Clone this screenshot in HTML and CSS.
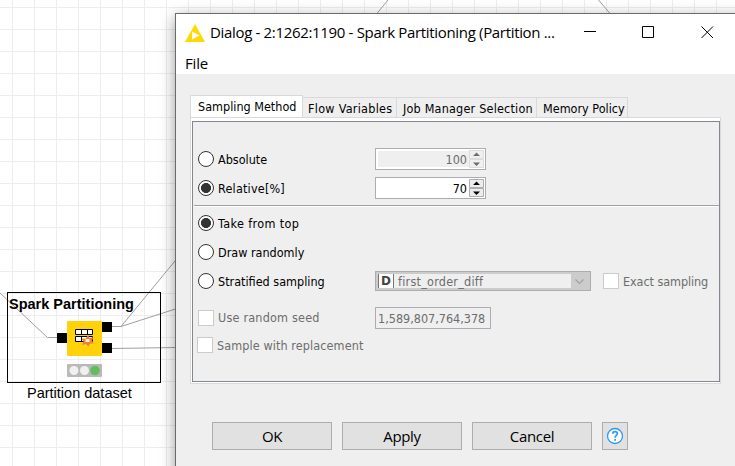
FILE: index.html
```
<!DOCTYPE html>
<html lang="en">
<head>
<meta charset="utf-8">
<title>Spark Partitioning</title>
<link rel="stylesheet" href="styles.css">
</head>
<body>
<main class="canvas">
  <svg class="wires" width="735" height="466" viewBox="0 0 735 466">
    <path d="M0 293L47.500 337.500H58M111 326.500H121L177 258.500M121 326.500L177 308.500M111 348.500L177 347.500M376.500 14L388 0M598.500 0L610.500 14"/>
  </svg>
  <section class="node">
    <h2 class="node-title">Spark Partitioning</h2>
    <svg class="node-icon" width="56" height="60" viewBox="0 0 56 60">
      <rect x="0" y="14" width="10" height="10" fill="#000"/>
      <rect x="45" y="3" width="10" height="10" fill="#000"/>
      <rect x="45" y="24" width="10" height="10" fill="#000"/>
      <rect x="10" y="2" width="35" height="35" rx="1" fill="#ffd20a"/>
      <path d="M18.500 10.500h17v5h-17zM24.500 10.500v5M30.500 10.500v5M18.500 17.500h17v5h-17zM24.500 17.500v5" fill="#fff" stroke="#000"/>
      <path d="M31 16l1.500 3 4-1-1.500 3.500 1.500 3-3.500 0-1.500 3-2.500-2.500-4 1 1.500-3.500-2-3 4 .3z" fill="#ef7d3c"/>
      <path d="M28.500 20h4v3h-4z" fill="#fff1e6"/>
      <rect x="10" y="45" width="35" height="13" rx="1" fill="#b9b9b9"/>
      <circle cx="17" cy="51.500" r="4.500" fill="#f0f0f0"/>
      <circle cx="27.500" cy="51.500" r="4.500" fill="#f0f0f0"/>
      <circle cx="38" cy="51.500" r="4.800" fill="#66bb60"/>
    </svg>
  </section>
  <p class="node-caption">Partition dataset</p>

  <section class="dialog">
    <header class="titlebar">
      <svg class="logo" width="20" height="18" viewBox="0 0 20 18"><path d="M10 0L20 18H0z" fill="#ffd800"/><path d="M7 7.500L14.500 11.500L7 15.500z" fill="#fff"/></svg>
      <h1 class="title">Dialog - 2:1262:1190 - Spark Partitioning (Partition ...</h1>
      <svg class="controls" width="132" height="14" viewBox="0 0 132 14"><path d="M0 5.500H12M58.500 .5h11v11h-11zM117.500 .5L129 12M129 .5L117.500 12" fill="none" stroke="#000"/></svg>
    </header>
    <nav class="menubar"><span class="menu-item">File</span></nav>
    <div class="content">
      <div class="tabs">
        <span class="tab tab-active">Sampling Method</span>
        <span class="tab tab-flow">Flow Variables</span>
        <span class="tab tab-job">Job Manager Selection</span>
        <span class="tab tab-memory">Memory Policy</span>
      </div>
      <div class="panel">
        <div class="panel-body">
          <div class="row">
            <i class="radio"></i><span class="label">Absolute</span>
            <div class="spinner disabled"><span class="value">100</span><svg width="16" height="20" viewBox="0 0 16 20"><path d="M.5 1.500h14v8h-14zM.5 10.500h14v8h-14z" fill="#efefef" stroke="#dcdcdc"/><path d="M4 7h7L7.500 3.500zM4 13.500h7l-3.500 3.500z" fill="#6d6d6d"/></svg></div>
          </div>
          <div class="row">
            <i class="radio on"></i><span class="label loose">Relative[%]</span>
            <div class="spinner"><span class="value">70</span><svg width="16" height="20" viewBox="0 0 16 20"><path d="M.5 1.500h14v8h-14zM.5 10.500h14v8h-14z" fill="#ececec" stroke="#adadad"/><path d="M4 7h7L7.500 3.500zM4 13.500h7l-3.500 3.500z" fill="#000"/></svg></div>
          </div>
          <hr class="divider">
          <div class="row"><i class="radio on"></i><span class="label looser">Take from top</span></div>
          <div class="row"><i class="radio"></i><span class="label">Draw randomly</span></div>
          <div class="row">
            <i class="radio"></i><span class="label">Stratified sampling</span>
            <div class="combo"><span class="type">D</span><span class="choice">first_order_diff</span><svg width="17" height="14" viewBox="0 0 17 14"><path d="M4.500 5.500l4 4 4-4" fill="none" stroke="#a3a3a3" stroke-width="1.200"/></svg></div>
            <i class="check exact"></i><span class="muted tight">Exact sampling</span>
          </div>
          <div class="row seed">
            <i class="check"></i><span class="label muted loose">Use random seed</span>
            <span class="field">1,589,807,764,378</span>
          </div>
          <div class="row replace"><i class="check"></i><span class="label muted slight">Sample with replacement</span></div>
        </div>
      </div>
      <footer class="buttons">
        <button class="button">OK</button>
        <button class="button">Apply</button>
        <button class="button">Cancel</button>
        <button class="button help" aria-label="Help"><svg width="18" height="18" viewBox="0 0 18 18"><circle cx="9" cy="9" r="7.500" fill="#fff" stroke="#2b9df4" stroke-width="1.300"/><path d="M6.700 6.800C6.800 3.800 11.500 4 11.300 6.800C11.200 8.400 9.100 8.500 9.100 10.700" fill="none" stroke="#2b9df4" stroke-width="1.800"/><path d="M8.200 12h1.800v1.800H8.200z" fill="#2b9df4"/></svg></button>
      </footer>
    </div>
  </section>
</main>
</body>
</html>
```
FILE: styles.css
```
* { box-sizing: border-box; }
body { margin: 0; overflow: hidden; }
h1, h2, p { margin: 0; font-weight: normal; }

.canvas {
  position: relative;
  width: 735px;
  height: 466px;
  overflow: hidden;
  background-color: #fff;
  background-image:
    linear-gradient(to right, #ededed 1px, transparent 1px),
    linear-gradient(to bottom, #ededed 1px, transparent 1px);
  background-size: 22px 22px;
  background-position: 12px 0, 0 7px;
}
.wires { position: absolute; left: 0; top: 0; fill: none; stroke: #a0a0a0; }

.node {
  position: absolute;
  left: 7px;
  top: 292px;
  width: 154px;
  height: 91px;
  border: 1px solid #000;
}
.node-title {
  font: bold 14.500px/16px "Liberation Sans", sans-serif;
  margin: 3px 0 0 1px;
  white-space: nowrap;
}
.node-icon { display: block; margin: 7px 0 0 49px; }
.node-caption {
  position: absolute;
  left: 27px;
  top: 384px;
  font: 14.500px/18px "Liberation Sans", sans-serif;
  white-space: nowrap;
}

.dialog {
  position: absolute;
  left: 175px;
  top: 13px;
  width: 600px;
  height: 500px;
  border: 1px solid #6b6b6b;
  background: #efefef;
  box-shadow: 0 4px 14px rgba(0, 0, 0, .4);
  font: 12.500px/16px "DejaVu Sans Condensed", "DejaVu Sans", sans-serif;
  white-space: nowrap;
}
.titlebar {
  display: flex;
  align-items: center;
  width: 559px;
  height: 37px;
  background: #fff;
  box-shadow: 10px 0 #fff;
  padding-left: 9px;
}
.title {
  width: 374px;
  margin: -2px 0 0 5px;
  font: 15px/20px "Open Sans", sans-serif;
  letter-spacing: -.33px;
}
.menubar {
  height: 23px;
  padding-left: 9px;
  background: #fff;
  font: 15px/25px "Open Sans", sans-serif;
  letter-spacing: -.2px;
}
.content { padding: 21px 0 0 14px; }

.tabs { display: flex; align-items: flex-end; height: 22px; }
.tab {
  height: 20px;
  padding: 3px 0 0 5px;
  border: 1px solid #d9d9d9;
  border-left: 0;
  border-bottom: 0;
}
.tab-active {
  height: 22px;
  width: 113px;
  padding: 3px 0 0 7px;
  background: #fff;
  border-left: 1px solid #d9d9d9;
}
.tab-flow { width: 94px; letter-spacing: .28px; }
.tab-job { width: 140px; padding-left: 6px; letter-spacing: .2px; }
.tab-memory { width: 91px; padding-left: 6px; }

.panel {
  width: 531px;
  height: 267px;
  padding: 3px 1px 1px;
  background: #fff;
  border: 1px solid #d9d9d9;
}
.panel-body {
  width: 528px;
  height: 261px;
  padding-top: 22px;
  border: 1px solid #828790;
  background: #efefef;
}
.row { display: flex; align-items: center; height: 29px; padding: 1px 0 0 5px; }
.seed { height: 28px; margin-top: 8px; }
.replace { height: 27px; padding-left: 4px; }
.divider { height: 2px; margin: 3px 0 1px 1px; border: 0; border-top: 1px solid #a0a0a0; background: #fff; }

.radio {
  flex: none;
  width: 16px;
  height: 16px;
  border: 1px solid #333;
  border-radius: 50%;
  background: #fff;
}
.radio.on { background: radial-gradient(circle, #333 4.700px, #fff 5.300px); }
.check { flex: none; width: 16px; height: 16px; border: 1px solid #ccc; background: #fff; }
.label { width: 157px; margin-left: 4px; padding-top: 1px; }
.muted { padding-top: 1px; color: #6d6d6d; }
.slight { letter-spacing: .1px; }
.loose { letter-spacing: .2px; }
.looser { letter-spacing: .38px; }
.tight { letter-spacing: -.07px; }

.spinner {
  display: flex;
  width: 111px;
  height: 22px;
  border: 1px solid #abadb3;
  background: #fff;
}
.value { width: 93px; padding: 3px 2px 0 0; text-align: right; }
.disabled .value { background: #efefef; box-shadow: inset 2px 2px #fff, inset 0 -2px #fff; color: #6d6d6d; }
.spinner svg { display: block; }

.combo {
  display: flex;
  width: 216px;
  height: 20px;
  padding: 2px;
  border: 1px solid #abadb3;
  background: #ccc;
  color: #6d6d6d;
}
.type {
  width: 16px;
  border: solid #777;
  border-width: 0 1px;
  background: #fff;
  color: #444;
  font: bold 12px/14px "DejaVu Sans", sans-serif;
  text-align: center;
}
.choice { width: 177px; padding-left: 4px; background: #efefef; line-height: 15px; letter-spacing: .24px; }
.exact { margin: 0 4px 0 12px; }
.field {
  width: 116px;
  height: 22px;
  padding: 3px 0 0 2px;
  border: 1px solid #abadb3;
  color: #6d6d6d;
}

.buttons { display: flex; gap: 10px; margin: 38px 0 0 22px; }
.button {
  width: 120px;
  height: 28px;
  padding: 0;
  border: 1px solid #adadad;
  background: #e1e1e1;
  color: #000;
  font: 15px/24px "Open Sans", sans-serif;
  letter-spacing: -.35px;
}
.help { width: 26px; }
.help svg { display: block; margin: 0 auto; }
```
